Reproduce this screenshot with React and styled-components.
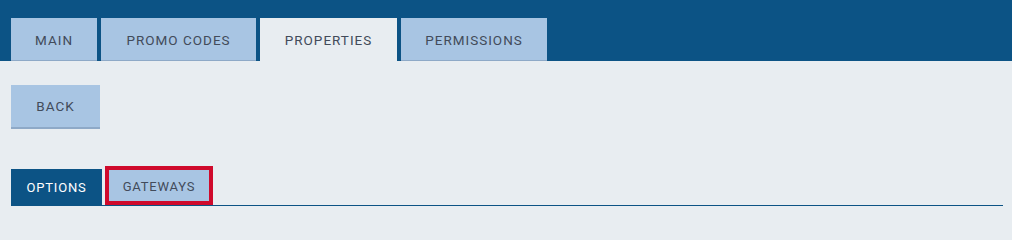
import React from "react";
import styled, { createGlobalStyle } from "styled-components";

const Global = createGlobalStyle`
  html, body { margin: 0; padding: 0; background: #e8edf1; }
  body { font-family: Roboto, "Liberation Sans", sans-serif; }
  * { box-sizing: border-box; }
`;

const Header = styled.div`
  background: #0c5385;
  height: 61px;
  padding: 18px 0 0 11px;
  display: flex;
  gap: 4px;
  align-items: stretch;
`;

const Tab = styled.div`
  height: 43px;
  padding: 0 24px;
  display: flex;
  align-items: center;
  justify-content: center;
  font-size: 13.5px;
  letter-spacing: 1px;
  color: #424b5a;
  background: ${(p) => (p.$active ? "#e8edf1" : "#a8c5e3")};
  border-bottom: 1px solid ${(p) => (p.$active ? "#e8edf1" : "#8ea9c7")};
  padding-top: 1px;
  min-width: ${(p) => p.$w}px;
`;

const Body = styled.div`
  padding: 24px 9px 0 11px;
`;

const BackButton = styled.div`
  width: 89px;
  height: 44px;
  display: flex;
  align-items: center;
  justify-content: center;
  background: #a8c5e3;
  border-bottom: 2px solid #8ea9c7;
  font-size: 13.5px;
  letter-spacing: 1px;
  color: #424b5a;
`;

const SubTabs = styled.div`
  margin-top: 37px;
  display: flex;
  align-items: flex-end;
  gap: 3px;
  border-bottom: 1px solid #0c5385;
  height: 40px;
`;

const SubTab = styled.div`
  height: ${(p) => (p.$focused ? 39 : 36)}px;
  width: ${(p) => p.$w}px;
  display: flex;
  align-items: center;
  justify-content: center;
  font-size: 13px;
  letter-spacing: 0.8px;
  color: ${(p) => (p.$active ? "#ffffff" : "#424b5a")};
  background: ${(p) => (p.$active ? "#0c5385" : "#a8c5e3")};
  border: ${(p) => (p.$focused ? "4px solid #cf0a2c" : "none")};
  padding-top: ${(p) => (p.$focused ? 1 : 1)}px;
`;

export default function App() {
  return (
    <>
      <Global />
      <Header>
        <Tab $w={85}>MAIN</Tab>
        <Tab $w={155}>PROMO CODES</Tab>
        <Tab $w={137} $active>PROPERTIES</Tab>
        <Tab $w={146}>PERMISSIONS</Tab>
      </Header>
      <Body>
        <BackButton>BACK</BackButton>
        <SubTabs>
          <SubTab $w={91} $active>OPTIONS</SubTab>
          <SubTab $w={108} $focused>GATEWAYS</SubTab>
        </SubTabs>
      </Body>
    </>
  );
}
